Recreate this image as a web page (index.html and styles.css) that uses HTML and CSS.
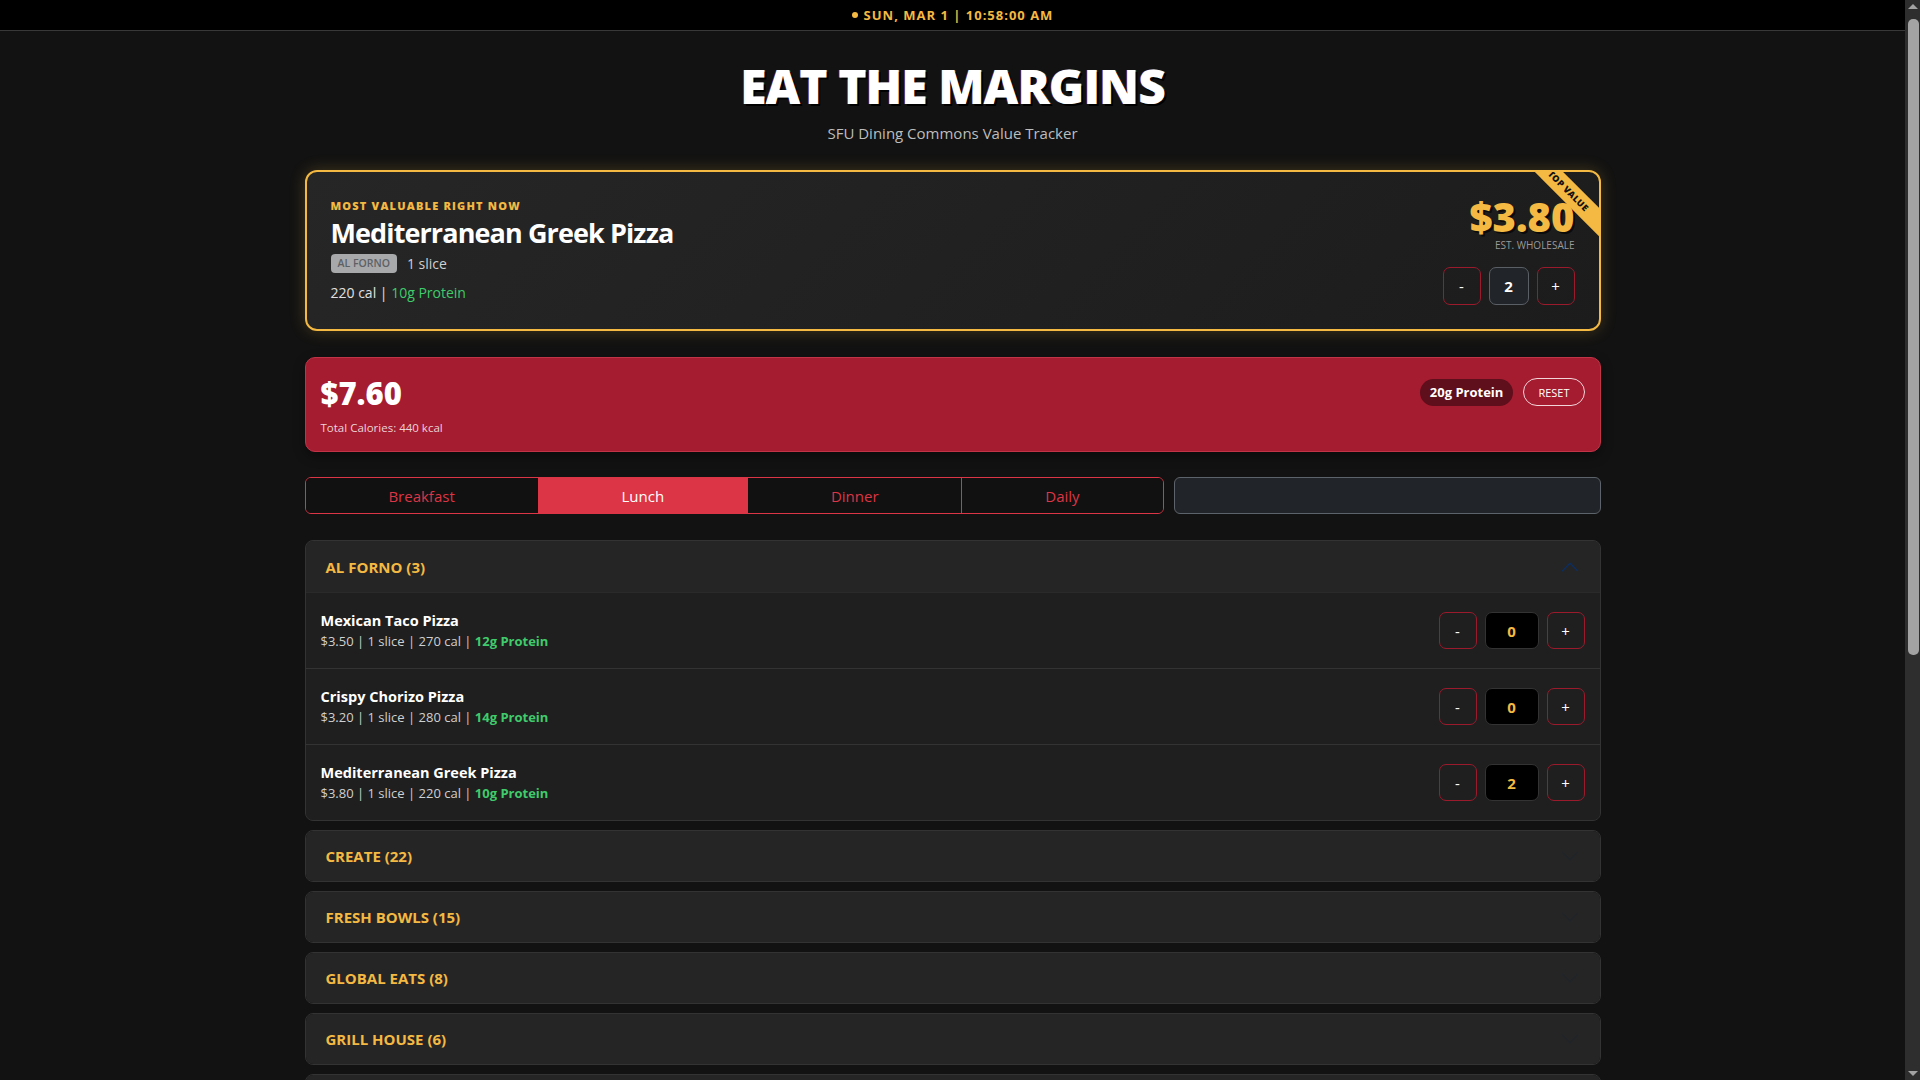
FILE: index.html
```html
<!DOCTYPE html>
<html lang="en">
<head>
<meta charset="utf-8">
<title>Eat The Margins</title>
<link rel="stylesheet" href="styles.css">
</head>
<body>
<div class="scrollbar" aria-hidden="true">
  <span class="sb-arrow sb-up"></span>
  <span class="sb-thumb"></span>
  <span class="sb-arrow sb-down"></span>
</div>

<div class="topbar"><span class="dot"></span>SUN, MAR 1 | 10:58:00 AM</div>

<main class="container">
  <header class="header">
    <h1 class="title">EAT THE MARGINS</h1>
    <p class="subtitle">SFU Dining Commons Value Tracker</p>
  </header>

  <section class="hero">
    <div class="ribbon">TOP VALUE</div>
    <div class="hero-left">
      <div class="hero-label">MOST VALUABLE RIGHT NOW</div>
      <h2 class="hero-name">Mediterranean Greek Pizza</h2>
      <div class="hero-meta"><span class="badge">AL FORNO</span><span class="serving">1 slice</span></div>
      <div class="hero-nutri">220 cal | <span class="protein">10g Protein</span></div>
    </div>
    <div class="hero-right">
      <div class="hero-price">$3.80</div>
      <div class="hero-sub">EST. WHOLESALE</div>
      <div class="qty qty-hero">
        <button class="qbtn">-</button>
        <div class="qval qval-hero">2</div>
        <button class="qbtn">+</button>
      </div>
    </div>
  </section>

  <section class="summary">
    <div class="summary-top">
      <div class="summary-total">$7.60</div>
      <div class="summary-actions">
        <span class="pill">20g Protein</span>
        <button class="reset">RESET</button>
      </div>
    </div>
    <div class="summary-cal">Total Calories: 440 kcal</div>
  </section>

  <section class="controls">
    <div class="tabs">
      <button class="tab">Breakfast</button>
      <button class="tab active">Lunch</button>
      <button class="tab">Dinner</button>
      <button class="tab">Daily</button>
    </div>
    <input class="search" type="text">
  </section>

  <section class="accordion">
    <div class="acc-item">
      <div class="acc-head open">
        <span class="acc-title">AL FORNO (3)</span>
        <svg class="chev up" viewBox="0 0 16 16"><path d="M2 5L8 11L14 5" fill="none" stroke="currentColor" stroke-linecap="round" stroke-linejoin="round"/></svg>
      </div>
      <div class="acc-body">
        <div class="row">
          <div class="row-info">
            <div class="row-name">Mexican Taco Pizza</div>
            <div class="row-meta">$3.50 | 1 slice | 270 cal | <span class="protein bold">12g Protein</span></div>
          </div>
          <div class="qty">
            <button class="qbtn">-</button>
            <div class="qval">0</div>
            <button class="qbtn">+</button>
          </div>
        </div>
        <div class="row">
          <div class="row-info">
            <div class="row-name">Crispy Chorizo Pizza</div>
            <div class="row-meta">$3.20 | 1 slice | 280 cal | <span class="protein bold">14g Protein</span></div>
          </div>
          <div class="qty">
            <button class="qbtn">-</button>
            <div class="qval">0</div>
            <button class="qbtn">+</button>
          </div>
        </div>
        <div class="row">
          <div class="row-info">
            <div class="row-name">Mediterranean Greek Pizza</div>
            <div class="row-meta">$3.80 | 1 slice | 220 cal | <span class="protein bold">10g Protein</span></div>
          </div>
          <div class="qty">
            <button class="qbtn">-</button>
            <div class="qval">2</div>
            <button class="qbtn">+</button>
          </div>
        </div>
      </div>
    </div>

    <div class="acc-item"><div class="acc-head"><span class="acc-title">CREATE (22)</span><svg class="chev" viewBox="0 0 16 16"><path d="M2 5L8 11L14 5" fill="none" stroke="currentColor" stroke-linecap="round" stroke-linejoin="round"/></svg></div></div>
    <div class="acc-item"><div class="acc-head"><span class="acc-title">FRESH BOWLS (15)</span><svg class="chev" viewBox="0 0 16 16"><path d="M2 5L8 11L14 5" fill="none" stroke="currentColor" stroke-linecap="round" stroke-linejoin="round"/></svg></div></div>
    <div class="acc-item"><div class="acc-head"><span class="acc-title">GLOBAL EATS (8)</span><svg class="chev" viewBox="0 0 16 16"><path d="M2 5L8 11L14 5" fill="none" stroke="currentColor" stroke-linecap="round" stroke-linejoin="round"/></svg></div></div>
    <div class="acc-item"><div class="acc-head"><span class="acc-title">GRILL HOUSE (6)</span><svg class="chev" viewBox="0 0 16 16"><path d="M2 5L8 11L14 5" fill="none" stroke="currentColor" stroke-linecap="round" stroke-linejoin="round"/></svg></div></div>
    <div class="acc-item"><div class="acc-head"><span class="acc-title">HOME STYLE (7)</span><svg class="chev" viewBox="0 0 16 16"><path d="M2 5L8 11L14 5" fill="none" stroke="currentColor" stroke-linecap="round" stroke-linejoin="round"/></svg></div></div>
    <div class="acc-item"><div class="acc-head"><span class="acc-title">NOODLE BAR (5)</span><svg class="chev" viewBox="0 0 16 16"><path d="M2 5L8 11L14 5" fill="none" stroke="currentColor" stroke-linecap="round" stroke-linejoin="round"/></svg></div></div>
    <div class="acc-item"><div class="acc-head"><span class="acc-title">PASTA (4)</span><svg class="chev" viewBox="0 0 16 16"><path d="M2 5L8 11L14 5" fill="none" stroke="currentColor" stroke-linecap="round" stroke-linejoin="round"/></svg></div></div>
    <div class="acc-item"><div class="acc-head"><span class="acc-title">SALAD BAR (12)</span><svg class="chev" viewBox="0 0 16 16"><path d="M2 5L8 11L14 5" fill="none" stroke="currentColor" stroke-linecap="round" stroke-linejoin="round"/></svg></div></div>
    <div class="acc-item"><div class="acc-head"><span class="acc-title">SOUP (3)</span><svg class="chev" viewBox="0 0 16 16"><path d="M2 5L8 11L14 5" fill="none" stroke="currentColor" stroke-linecap="round" stroke-linejoin="round"/></svg></div></div>
    <div class="acc-item"><div class="acc-head"><span class="acc-title">SWEETS (9)</span><svg class="chev" viewBox="0 0 16 16"><path d="M2 5L8 11L14 5" fill="none" stroke="currentColor" stroke-linecap="round" stroke-linejoin="round"/></svg></div></div>
    <div class="acc-item"><div class="acc-head"><span class="acc-title">THE DELI (6)</span><svg class="chev" viewBox="0 0 16 16"><path d="M2 5L8 11L14 5" fill="none" stroke="currentColor" stroke-linecap="round" stroke-linejoin="round"/></svg></div></div>
  </section>
</main>
</body>
</html>
```
FILE: styles.css
```css
html { color-scheme: dark; }
* { box-sizing: border-box; }
body {
  margin: 0;
  padding-right: 15px;
  background: #121212;
  color: #fff;
  font-family: "Open Sans", "Noto Sans", sans-serif;
}
button, input { font-family: inherit; }

/* imitation of the browser's dark scrollbar */
.scrollbar {
  position: fixed;
  top: 0; right: 0; bottom: 0;
  width: 15px;
  background: #2e2e2e;
  z-index: 10;
}
.sb-thumb {
  position: absolute;
  left: 3px; right: 1px;
  top: 19px; height: 636px;
  background: #a3a3a3;
  border-radius: 5px;
}
.sb-arrow {
  position: absolute;
  left: 3px;
  width: 0; height: 0;
  border-left: 5px solid transparent;
  border-right: 5px solid transparent;
}
.sb-up { top: 4px; border-bottom: 5px solid #a3a3a3; }
.sb-down { bottom: 4px; border-top: 5px solid #a3a3a3; }

.topbar {
  height: 31px;
  background: #000;
  border-bottom: 1px solid #383838;
  display: flex;
  align-items: center;
  justify-content: center;
  color: #f4b942;
  font-size: 13px;
  font-weight: 700;
  letter-spacing: 1px;
}
.dot {
  width: 6px; height: 6px; border-radius: 50%;
  background: #f4b942;
  margin-right: 6px;
}

.container {
  width: 1296px;
  margin: 0 auto;
  padding-bottom: 44px;
}

.header { text-align: center; padding-top: 26px; }
.title {
  margin: 0;
  font-size: 48px;
  font-weight: 800;
  line-height: 58px;
  letter-spacing: -1px;
  color: #fff;
  text-shadow: 2px 2px 0 #000, -1px 0 0 rgba(255,40,60,.35), 1px 0 0 rgba(0,200,255,.35);
}
.subtitle {
  margin: 6px 0 0;
  font-size: 15px;
  line-height: 24px;
  color: #bdbdbd;
}

/* hero */
.hero {
  position: relative;
  overflow: hidden;
  margin-top: 25px;
  border: 2px solid #f4b942;
  border-radius: 12px;
  background: linear-gradient(135deg, #262626 0%, #1c1c1c 100%);
  box-shadow: 0 0 16px rgba(244,185,66,.22);
  padding: 24px;
  display: flex;
  align-items: center;
  justify-content: space-between;
  min-height: 161px;
}
.ribbon {
  position: absolute;
  top: 9px; right: -29px;
  width: 120px; height: 20px;
  transform: rotate(45deg);
  background: #f4b942;
  color: #111;
  font-size: 9px;
  font-weight: 800;
  line-height: 20px;
  text-align: center;
  letter-spacing: .3px;
}
.hero-label {
  color: #f4b942;
  font-size: 11px;
  font-weight: 800;
  letter-spacing: 1.2px;
  line-height: 16px;
}
.hero-name {
  margin: 2px 0 0;
  font-size: 27px;
  font-weight: 700;
  line-height: 34px;
  letter-spacing: -0.9px;
  color: #fff;
}
.hero-meta { display: flex; align-items: center; gap: 10px; margin-top: 4px; }
.badge {
  background: #a8a9ab;
  color: #5d6166;
  font-size: 10.5px;
  font-weight: 600;
  border-radius: 4px;
  padding: 1px 7px;
  line-height: 17px;
}
.serving { font-size: 14px; color: #d0d0d0; }
.hero-nutri { margin-top: 9px; font-size: 14px; line-height: 21px; color: #e0e0e0; }
.protein { color: #3fcb6b; }
.protein.bold { font-weight: 700; }

.hero-right { display: flex; flex-direction: column; align-items: flex-end; }
.hero-price {
  color: #f4b942;
  font-size: 40px;
  font-weight: 800;
  line-height: 40px;
  text-shadow: 2px 2px 0 rgba(0,0,0,.6);
}
.hero-sub {
  font-size: 10px;
  color: #9a9a9a;
  line-height: 12px;
  margin-top: 2px;
}

.qty { display: flex; align-items: center; gap: 8px; }
.qty-hero { margin-top: 16px; }
.qbtn {
  width: 38px; height: 37px;
  border: 1px solid #9b1a2c;
  border-radius: 7px;
  background: transparent;
  color: #fff;
  font-size: 15px;
  padding: 0;
  display: flex; align-items: center; justify-content: center;
}
.qty-hero .qbtn { height: 38px; }
.qval {
  width: 54px; height: 37px;
  border: 1px solid #333;
  border-radius: 7px;
  background: #000;
  color: #f4b942;
  font-weight: 700;
  font-size: 15px;
  display: flex; align-items: center; justify-content: center;
}
.qval-hero {
  width: 40px; height: 38px;
  background: #212529;
  border-color: #5a5f66;
  color: #fff;
}

/* summary */
.summary {
  margin-top: 26px;
  background: #a51b30;
  border: 1px solid #c13448;
  border-radius: 10px;
  padding: 16px 15px 14px 15px;
  box-shadow: 0 4px 12px rgba(0,0,0,.4);
  min-height: 95px;
}
.summary-top { display: flex; align-items: center; justify-content: space-between; }
.summary-total { font-size: 31px; font-weight: 800; line-height: 38px; }
.summary-actions { display: flex; align-items: center; gap: 10px; margin-top: -2px; }
.pill {
  background: #5f0e1b;
  border-radius: 14px;
  padding: 3px 10px;
  font-size: 13px;
  font-weight: 700;
  line-height: 21px;
}
.reset {
  background: transparent;
  border: 1px solid #f2d5d9;
  border-radius: 14px;
  color: #fff;
  font-size: 11px;
  padding: 0 14px;
  height: 28px;
}
.summary-cal { margin-top: 8px; font-size: 11.5px; color: #ecd3d7; line-height: 16px; }

/* controls */
.controls {
  margin-top: 25px;
  display: grid;
  grid-template-columns: 859px 1fr;
  gap: 10px;
}
.tabs {
  display: flex;
  border: 1px solid #dc3545;
  border-radius: 6px;
  overflow: hidden;
  height: 37px;
}
.tab {
  flex: 1 1 auto;
  background: #111;
  border: none;
  border-left: 1px solid #dc3545;
  color: #dc3545;
  font-size: 15px;
  padding: 0 12px;
}
.tab:first-child { border-left: none; }
.tab.active { background: #dc3545; color: #fff; }
.search {
  height: 37px;
  background: #212529;
  border: 1px solid #5d636a;
  border-radius: 6px;
}

/* accordion */
.accordion { margin-top: 26px; }
.acc-item {
  background: #252525;
  border: 1px solid #333;
  border-radius: 8px;
  overflow: hidden;
  margin-bottom: 9px;
}
.acc-head {
  height: 50px;
  display: flex;
  align-items: center;
  justify-content: space-between;
  padding: 0 20px;
  background: #252525;
}
.acc-head.open { height: 51px; }
.acc-title { color: #f4b942; font-weight: 700; font-size: 15px; }
.chev { width: 20px; height: 20px; color: #212529; }
.chev.up { color: #0c2e63; transform: rotate(180deg); }

.acc-body { background: #1f1f1f; }
.row {
  height: 76px;
  display: flex;
  align-items: center;
  justify-content: space-between;
  padding: 0 15px 0 15px;
  border-top: 1px solid #2a2a2a;
}
.row + .row { border-top: 1px solid #333; }
.row-name { font-size: 14.5px; font-weight: 700; line-height: 20px; }
.row-meta { font-size: 13px; color: #d0d0d0; line-height: 20px; }
```
